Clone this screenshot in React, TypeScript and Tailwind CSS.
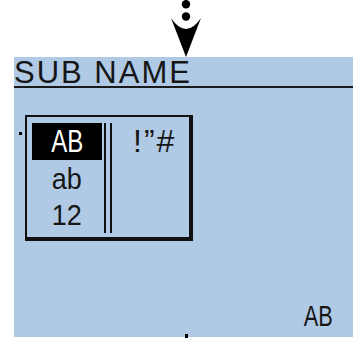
export default function App() {
  return (
    <div className="relative w-[353px] h-[338px] bg-white text-[#161616] font-['Liberation_Sans',Arial,sans-serif]">
      {/* pointer arrow */}
      <div className="h-[57px] pl-[170px]">
        <svg width="32" height="57" viewBox="170 0 32 57">
          <circle cx="186" cy="4.2" r="4.2" fill="#000" />
          <circle cx="186" cy="16.5" r="4.2" fill="#000" />
          <path d="M171 18 Q186 40 201 18 L186 57 Z" fill="#000" />
        </svg>
      </div>

      {/* LCD panel */}
      <div className="ml-[14px] h-[280px] bg-[#b0c9e4] flex flex-col">
        <div className="h-[31px] leading-[31px] text-[31px] tracking-[2px] border-b-2 border-[#1a1a1a]">
          SUB NAME
        </div>

        <div className="flex items-start pl-[5px] mt-[27px]">
          <div className="w-[3px] h-[3px] bg-black mt-[17px]" />
          <div className="ml-[3px] w-[168px] h-[126px] border-t-2 border-l-2 border-r-4 border-b-4 border-[#111] flex items-start pt-[6px] pl-[5px]">
            <div className="w-[70px] flex flex-col text-center">
              <div className="h-[37px] bg-black text-white text-[32px] leading-[37px]">
                <span className="inline-block scale-x-75">AB</span>
              </div>
              <div className="h-[37px] text-[30px] leading-[37px]">
                <span className="inline-block scale-x-90">ab</span>
              </div>
              <div className="h-[36px] text-[30px] leading-[36px]">
                <span className="inline-block scale-x-90">12</span>
              </div>
            </div>
            <div className="ml-[2px] flex gap-[4px] h-[110px]">
              <div className="w-[2px] bg-[#111]" />
              <div className="w-[2px] bg-[#111]" />
            </div>
            <div className="ml-[21px] h-[37px] text-[32px] leading-[37px] tracking-[2px]">
              !”#
            </div>
          </div>
        </div>

        <div className="flex-1 flex items-end justify-end pr-[15px] pb-[6px]">
          <span className="inline-block text-[29px] leading-[30px] scale-x-75">AB</span>
        </div>
      </div>

      <div className="absolute left-[185px] top-[334px] w-[3px] h-[4px] bg-black" />
    </div>
  );
}
